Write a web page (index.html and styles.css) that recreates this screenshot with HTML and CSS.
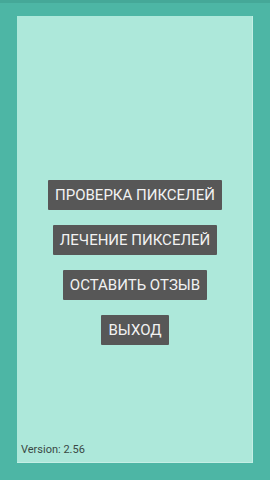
FILE: index.html
```html
<!DOCTYPE html>
<html>
<head>
<meta charset="utf-8">
<link rel="stylesheet" href="styles.css">
</head>
<body>
<div class="statusbar"></div>
<div class="panel">
  <div class="menu">
    <button class="btn">ПРОВЕРКА ПИКСЕЛЕЙ</button>
    <button class="btn">ЛЕЧЕНИЕ ПИКСЕЛЕЙ</button>
    <button class="btn">ОСТАВИТЬ ОТЗЫВ</button>
    <button class="btn">ВЫХОД</button>
  </div>
  <div class="version">Version: 2.56</div>
</div>
</body>
</html>
```
FILE: styles.css
```css
html, body {
  margin: 0;
  padding: 0;
}
body {
  width: 270px;
  height: 480px;
  background: #4db6a5;
  font-family: Roboto, "Noto Sans", sans-serif;
  overflow: hidden;
}
.statusbar {
  height: 3px;
  background: #45a898;
}
.panel {
  margin: 13px 17px 0 17px;
  height: 447px;
  background: #ade8da;
  box-shadow: inset -1px -1px 0 #c4efe5;
  display: flex;
  flex-direction: column;
  box-sizing: border-box;
  padding-top: 164px;
}
.menu {
  display: flex;
  flex-direction: column;
  align-items: center;
  gap: 15px;
}
.btn {
  height: 30px;
  padding: 0 7px;
  border: none;
  border-radius: 1px;
  background: #575757;
  color: #f2f2f2;
  font-family: Roboto, "Noto Sans", sans-serif;
  font-size: 15px;
  line-height: 30px;
  cursor: pointer;
}
.version {
  margin-top: auto;
  padding: 0 0 7px 4px;
  font-size: 11px;
  color: #3a4845;
}
```
